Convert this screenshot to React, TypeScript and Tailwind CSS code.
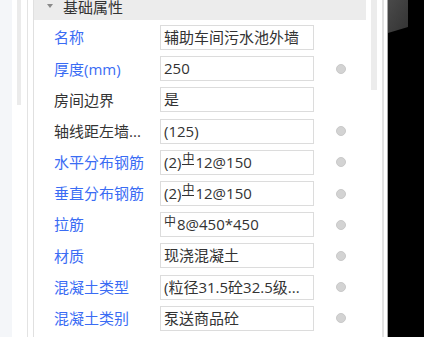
import React from "react";

type Row = {
  label: string;
  value: React.ReactNode;
  blue: boolean;
  dot: boolean;
};

// HRB400 rebar mark: 中 with a bar underneath
const Hrb = () => (
  <span className="inline-block text-[12px] leading-[10px] border-b border-[#333] relative -top-[3px] mx-[1px]">
    中
  </span>
);
const Hpb = () => (
  <span className="inline-block text-[12px] leading-[10px] relative -top-[3px] mr-[1px]">
    中
  </span>
);

const rows: Row[] = [
  { label: "名称", value: "辅助车间污水池外墙", blue: true, dot: false },
  { label: "厚度(mm)", value: "250", blue: true, dot: true },
  { label: "房间边界", value: "是", blue: false, dot: false },
  { label: "轴线距左墙...", value: "(125)", blue: false, dot: true },
  {
    label: "水平分布钢筋",
    value: (
      <>
        (2)
        <Hrb />
        12@150
      </>
    ),
    blue: true,
    dot: true,
  },
  {
    label: "垂直分布钢筋",
    value: (
      <>
        (2)
        <Hrb />
        12@150
      </>
    ),
    blue: true,
    dot: true,
  },
  {
    label: "拉筋",
    value: (
      <>
        <Hpb />
        8@450*450
      </>
    ),
    blue: true,
    dot: true,
  },
  { label: "材质", value: "现浇混凝土", blue: true, dot: true },
  { label: "混凝土类型", value: "(粒径31.5砼32.5级...", blue: true, dot: true },
  { label: "混凝土类别", value: "泵送商品砼", blue: true, dot: true },
];

export default function App() {
  return (
    <div
      className="flex w-[424px] h-[337px] overflow-hidden bg-white text-[#333]"
      style={{ fontFamily: '"Open Sans", "Noto Sans CJK SC", sans-serif' }}
    >
      <div className="w-[12px] bg-[#f4f6f9]" />
      <div className="w-[15px] pl-[5px]">
        <div className="w-[4px] h-[105px] bg-[#ebebeb]" />
      </div>
      <div className="w-px bg-[#e3e3e3]" />
      <div className="w-[5px]" />
      <div className="w-px bg-[#e0e0e0]" />

      {/* property panel */}
      <div className="w-[332px] flex flex-col">
        <div className="h-[20px] bg-[#ececec] flex items-start">
          <span className="ml-[13px] mt-[4px] w-0 h-0 border-l-[3px] border-r-[3px] border-t-[4px] border-l-transparent border-r-transparent border-t-[#8a8a8a]" />
          <span className="ml-[10px] text-[15px] leading-[15px] text-[#333]">
            基础属性
          </span>
        </div>
        <div className="pt-[2px] flex flex-col">
          {rows.map((r, i) => (
            <div key={i} className="h-[31.2px] flex items-center text-[15px]">
              <div
                className={`w-[126px] pl-[20px] whitespace-nowrap ${
                  r.blue ? "text-[#3a6cf4]" : "text-[#333]"
                }`}
              >
                {r.label}
              </div>
              <div className="w-[154px] h-[25px] border border-[#dcdcdc] bg-white flex items-center pl-[3px] whitespace-nowrap overflow-hidden leading-none">
                {r.value}
              </div>
              <div className="flex-1 flex justify-center pl-[1px]">
                {r.dot && (
                  <div className="w-[10px] h-[10px] rounded-full bg-[#d3d3d3] border border-[#c9c9c9]" />
                )}
              </div>
            </div>
          ))}
        </div>
      </div>

      <div className="w-[5px]" />
      <div className="w-[6px]">
        <div className="w-[6px] h-[90px] bg-[#ececec]" />
      </div>
      <div className="w-[5px]" />
      <div className="w-[2px] bg-[#e2e2e2]" />
      <div className="w-[3px]" />
      <div className="w-px bg-[#a8a8a8]" />

      {/* viewport */}
      <div className="flex-1 bg-black relative">
        <svg className="absolute left-0 top-0" width="36" height="40" viewBox="0 0 36 40">
          <defs>
            <linearGradient id="g" x1="0" y1="0" x2="1" y2="1">
              <stop offset="0" stopColor="#4a4a4a" />
              <stop offset="1" stopColor="#333" />
            </linearGradient>
          </defs>
          <polygon points="0,0 20,0 20,27 0,33" fill="url(#g)" />
        </svg>
      </div>
    </div>
  );
}
